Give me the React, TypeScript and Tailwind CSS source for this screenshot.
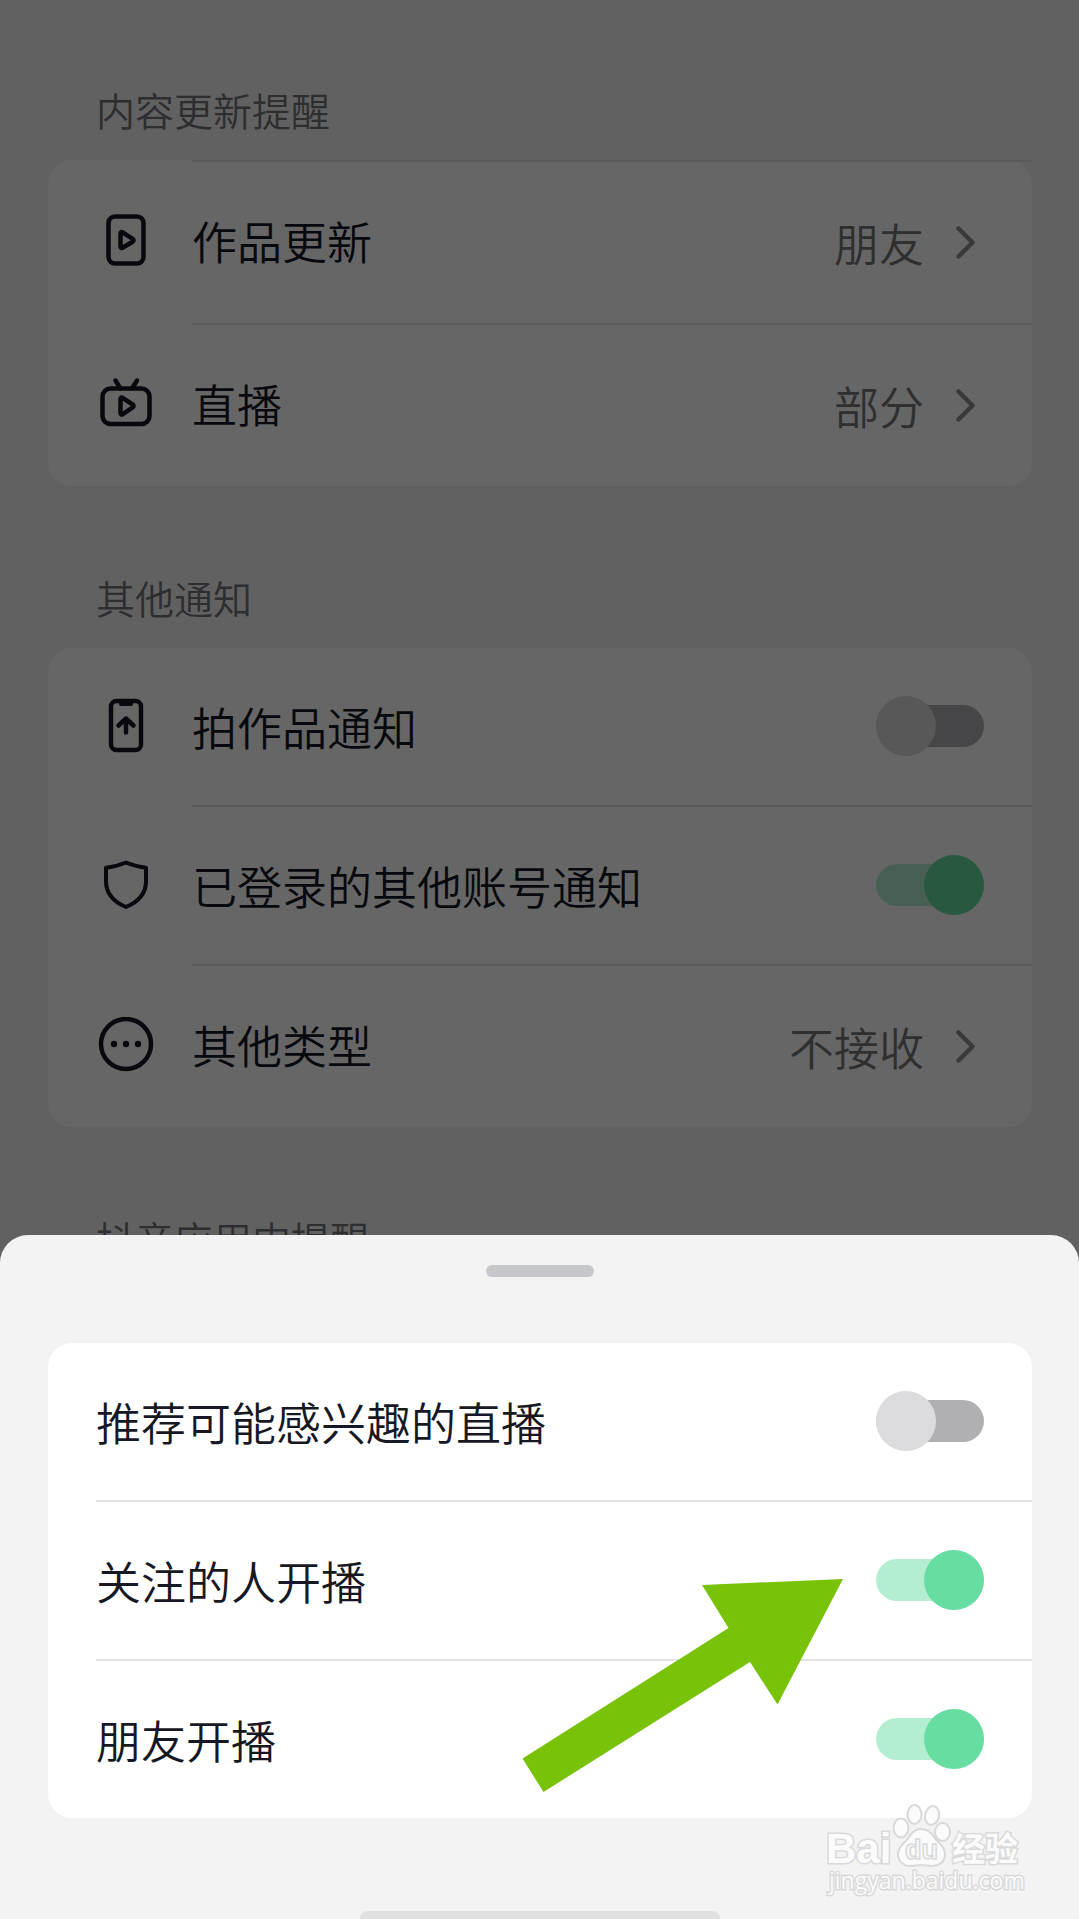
/**
 * Notification settings page with the live reminder bottom sheet opened.
 */

import { useId, useState, type ReactNode } from 'react';

interface SwitchRowProps {
  label: string;
  icon?: ReactNode;
  defaultOn?: boolean;
}

interface LinkRowProps {
  label: string;
  value: string;
  icon: ReactNode;
}

function IconBox({ children }: { children: ReactNode }) {
  return (
    <svg
      className="mr-9 ml-12 size-[60px] shrink-0"
      viewBox="0 0 60 60"
      fill="none"
      stroke="currentColor"
      strokeWidth="4.5"
      strokeLinecap="round"
      strokeLinejoin="round"
      aria-hidden="true"
    >
      {children}
    </svg>
  );
}

function VideoIcon() {
  return (
    <IconBox>
      <rect x="12.5" y="3.5" width="35" height="47" rx="6.5" />
      <path d="M24.5 20.5c0-1.3 1-1.8 2-1.2l10.2 6.6c1.2.8 1.2 2 0 2.8l-10.2 6c-1 .6-2 0-2-1.2z" />
    </IconBox>
  );
}

function LiveIcon() {
  return (
    <IconBox>
      <rect x="6.5" y="12.5" width="47" height="35.5" rx="8" />
      <path d="M19.5 4.500l5 8M41 4.500l-5 8" />
      <path d="M24.5 23c0-1.3 1-1.8 2-1.2l10.2 6.7c1.2.8 1.2 2 0 2.8l-10.2 7c-1 .6-2 0-2-1.2z" />
    </IconBox>
  );
}

function PhoneUploadIcon() {
  return (
    <IconBox>
      <rect x="15" y="5" width="30" height="49" rx="5.5" />
      <path d="M23 4h14v4a2 2 0 0 1-2 2H25a2 2 0 0 1-2-2z" fill="currentColor" stroke="none" />
      <path d="M30 36.5v-14M22.500 29.500l7.500-7 7.500 7" />
    </IconBox>
  );
}

function ShieldIcon() {
  return (
    <IconBox>
      <path
        d="M30 7.500c6 2.500 12.500 4.500 20 5.200v13.500C50 38 43 46.500 30 52 17 46.500 10 38 10 26.200V12.700C17.500 12 24 10 30 7.500z"
        strokeWidth="4"
      />
    </IconBox>
  );
}

function MoreIcon() {
  return (
    <IconBox>
      <circle cx="30" cy="27" r="25" />
      <g fill="currentColor" stroke="none">
        <circle cx="18" cy="27" r="3.2" />
        <circle cx="30" cy="27" r="3.2" />
        <circle cx="42" cy="27" r="3.2" />
      </g>
    </IconBox>
  );
}

function SectionTitle({ children }: { children: ReactNode }) {
  return <h2 className="pb-6 pl-12 text-[39px] leading-[54px] text-[#737378]">{children}</h2>;
}

function Switch({ id, defaultOn = false }: { id: string; defaultOn?: boolean }) {
  const [on, setOn] = useState(defaultOn);

  return (
    <input
      id={id}
      type="checkbox"
      role="switch"
      checked={on}
      onChange={(e) => setOn(e.target.checked)}
      className="relative mr-12 h-[60px] w-[108px] shrink-0 cursor-pointer appearance-none before:absolute before:inset-x-0 before:inset-y-[9px] before:rounded-full before:bg-[#b0afb4] after:absolute after:top-0 after:left-0 after:size-[60px] after:rounded-full after:bg-[#dcdcde] checked:before:bg-[#b3eed1] checked:after:left-12 checked:after:bg-[#67dda2]"
    />
  );
}

function SwitchRow({ label, icon, defaultOn }: SwitchRowProps) {
  const id = useId();

  return (
    <div className="flex h-[157px] items-center pb-0.5">
      {icon}
      <label htmlFor={id} className="flex-1 pt-0.5">
        {label}
      </label>
      <Switch id={id} defaultOn={defaultOn} />
    </div>
  );
}

function LinkRow({ label, value, icon }: LinkRowProps) {
  return (
    <button type="button" className="flex h-[161px] w-full items-center text-left">
      {icon}
      <span className="flex-1 pb-1">{label}</span>
      <span className="text-[#757578]">{value}</span>
      <svg
        className="mr-14 ml-8 h-9 w-5 text-[#909093]"
        viewBox="0 0 20 36"
        fill="none"
        stroke="currentColor"
        strokeWidth="4.5"
        strokeLinecap="round"
        strokeLinejoin="round"
        aria-hidden="true"
      >
        <path d="M2.5 3.5l14 14-14 14" />
      </svg>
    </button>
  );
}

function Divider({ inset = false }: { inset?: boolean }) {
  return <div className={`h-[2px] bg-[#e3e3e3] ${inset ? 'ml-36' : ''}`} />;
}

function Watermark() {
  return (
    <svg
      className="absolute right-[54px] bottom-[18px] h-[100px] w-[204px]"
      viewBox="0 0 204 100"
      fill="#fbfbfb"
      stroke="#d9d9d9"
      strokeWidth="2"
      role="img"
      aria-label="Baidu 经验"
    >
      <g paintOrder="stroke" strokeWidth="3">
        <text x="5" y="62" fontSize="42" fontWeight="700" fontFamily="'Liberation Sans', sans-serif">
          Bai
        </text>
        <text x="131" y="60" fontSize="33" fontWeight="700" fontFamily="'Noto Sans CJK SC', sans-serif">
          经验
        </text>
        <text x="8" y="88" fontSize="23" fontWeight="400" fontFamily="'Open Sans', sans-serif">
          jingyan.baidu.com
        </text>
      </g>
      <ellipse cx="80" cy="27" rx="7.5" ry="9.5" />
      <ellipse cx="93.5" cy="13.5" rx="7" ry="9.5" />
      <ellipse cx="111" cy="14.5" rx="7" ry="9.5" transform="rotate(12 111 14.5)" />
      <ellipse cx="121.5" cy="31" rx="7.5" ry="9" />
      <path d="M100 28c6 0 10 3 13 8 4 6 11 9 11 17 0 8-6 12-13 12-4 0-7-1-11-1s-7 1-11 1c-7 0-12-5-12-12 0-8 7-11 11-17 3-5 6-8 12-8z" />
      <text
        x="84"
        y="58"
        fontSize="27"
        fontWeight="700"
        strokeWidth="1.5"
        fontFamily="'Liberation Sans', sans-serif"
      >
        du
      </text>
    </svg>
  );
}

export default function App() {
  return (
    <div className="relative h-screen overflow-hidden bg-[#f3f3f3] font-['Noto_Sans_CJK_SC',sans-serif] text-[45px] leading-[60px] font-[350] text-[#161823]">
      {/* Settings page */}
      <main className="pr-[47px] pl-12">
        <section className="pt-[82px]">
          <SectionTitle>内容更新提醒</SectionTitle>
          <div className="rounded-3xl bg-white">
            <Divider inset />
            <LinkRow label="作品更新" value="朋友" icon={<VideoIcon />} />
            <Divider inset />
            <LinkRow label="直播" value="部分" icon={<LiveIcon />} />
          </div>
        </section>

        <section className="pt-[84px]">
          <SectionTitle>其他通知</SectionTitle>
          <div className="rounded-3xl bg-white">
            <SwitchRow label="拍作品通知" icon={<PhoneUploadIcon />} />
            <Divider inset />
            <SwitchRow label="已登录的其他账号通知" icon={<ShieldIcon />} defaultOn />
            <Divider inset />
            <LinkRow label="其他类型" value="不接收" icon={<MoreIcon />} />
          </div>
        </section>

        <section className="pt-[84px]">
          <SectionTitle>抖音应用内提醒</SectionTitle>
        </section>
      </main>

      {/* Backdrop */}
      <div className="absolute inset-0 bg-black/60" />

      {/* Bottom sheet */}
      <div
        role="dialog"
        aria-label="直播"
        className="absolute inset-x-0 bottom-0 rounded-t-[28px] bg-[#f3f3f3] pt-[30px]"
      >
        <div className="mx-auto h-3 w-[108px] rounded-full bg-[#c6c7cb]" />

        <div className="mt-[66px] mr-[47px] mb-[93px] ml-12 rounded-3xl bg-white pl-12">
          <SwitchRow label="推荐可能感兴趣的直播" />
          <Divider />
          <SwitchRow label="关注的人开播" defaultOn />
          <Divider />
          <SwitchRow label="朋友开播" defaultOn />
        </div>

        <div className="mx-auto h-2 w-[360px] rounded-t-lg bg-[#e0e0e0]" />

        {/* Pointer to the followed-people switch */}
        <svg
          className="absolute top-[344px] right-[236px] h-[213px] w-[321px]"
          viewBox="0 0 321 213"
          fill="#78c20a"
          aria-hidden="true"
        >
          <path d="M180 6L321 0 255.5 125.5 228 83 21.5 213 .5 179.5 206.5 49z" />
        </svg>

        <Watermark />
      </div>
    </div>
  );
}
